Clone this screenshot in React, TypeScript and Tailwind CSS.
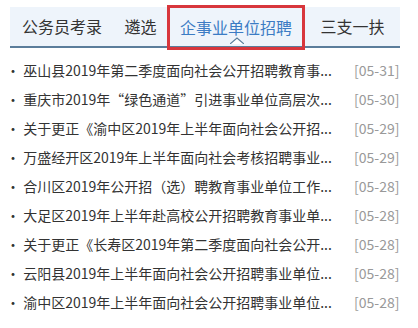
import React from "react";

const tabs = ["公务员考录", "遴选", "企事业单位招聘", "三支一扶"];

const news = [
  { title: "巫山县2019年第二季度面向社会公开招聘教育事...", date: "05-31" },
  { title: "重庆市2019年“绿色通道”引进事业单位高层次...", date: "05-30" },
  { title: "关于更正《渝中区2019年上半年面向社会公开招...", date: "05-29" },
  { title: "万盛经开区2019年上半年面向社会考核招聘事业...", date: "05-29" },
  { title: "合川区2019年公开招（选）聘教育事业单位工作...", date: "05-28" },
  { title: "大足区2019年上半年赴高校公开招聘教育事业单...", date: "05-28" },
  { title: "关于更正《长寿区2019年第二季度面向社会公开...", date: "05-28" },
  { title: "云阳县2019年上半年面向社会公开招聘事业单位...", date: "05-28" },
  { title: "渝中区2019年上半年面向社会公开招聘事业单位...", date: "05-28" },
];

const App: React.FC = () => {
  return (
    <div
      className="w-[418px] h-[328px] bg-white overflow-hidden"
      style={{ fontFamily: '"Noto Sans CJK SC", "Noto Sans", sans-serif' }}
    >
      {/* Tabs */}
      <div className="pl-[10px] pt-[7px]">
        <div className="w-[390px] h-[41px] bg-[#eef4fb] border-b-2 border-[#5b7d9b] flex items-end">
          <div className="w-[104px] h-[40px] flex items-center justify-center text-[16px] text-[#333]">
            {tabs[0]}
          </div>
          <div className="w-[53px] h-[40px] flex items-center justify-center text-[16px] text-[#333]">
            {tabs[1]}
          </div>
          <div className="relative w-[138px] h-[45px] mb-[-4px] border-[3px] border-[#d8363c] flex items-center justify-center text-[16px] text-[#3c7cc4]">
            <span className="mb-[2px]">{tabs[2]}</span>
            <svg
              className="absolute left-[60px] bottom-[3px]"
              width="14"
              height="7"
              viewBox="0 0 14 7"
            >
              <path d="M0 7 L7 1 L14 7" fill="#fff" stroke="#5b7d9b" strokeWidth="1.2" />
            </svg>
          </div>
          <div className="flex-1 h-[40px] flex items-center justify-center text-[16px] text-[#333]">
            {tabs[3]}
          </div>
        </div>
      </div>

      {/* List */}
      <ul className="mt-[8px]">
        {news.map((n, i) => (
          <li key={i} className="h-[29px] flex items-center text-[14px]">
            <span className="pl-[6px] w-[348px] text-[#333] whitespace-nowrap overflow-hidden">
              · {n.title}
            </span>
            <span className="text-[#999] ml-[6px]">[{n.date}]</span>
          </li>
        ))}
      </ul>
    </div>
  );
};

export default App;
